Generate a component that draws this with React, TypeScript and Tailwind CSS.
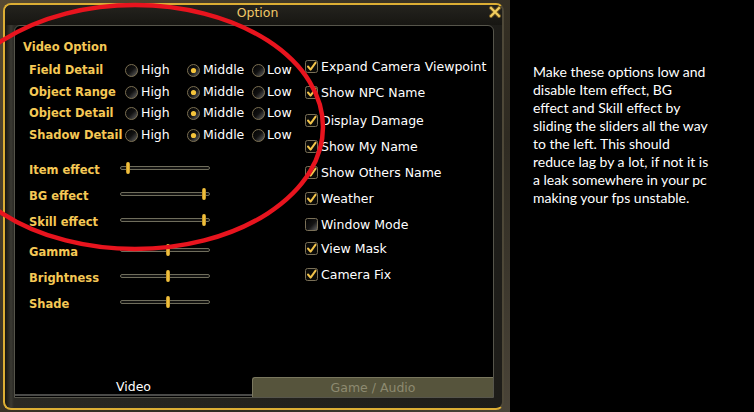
import React from "react";

const ui = { fontFamily: '"DejaVu Sans", Verdana, sans-serif' };

function Radio({ on }: { on?: boolean }) {
  return (
    <svg width="13" height="13" viewBox="0 0 13 13" className="shrink-0">
      <circle cx="6.5" cy="6.5" r="6" fill="url(#radioFill)" stroke="#7b6f52" strokeWidth="1" />
      {on && <circle cx="6.5" cy="6.5" r="2.6" fill="#f4c43c" />}
    </svg>
  );
}

function Check({ on }: { on: boolean }) {
  return (
    <svg width="13" height="13" viewBox="0 0 13 13" className="shrink-0 overflow-visible">
      <rect x="0.5" y="0.5" width="12" height="12" rx="2" fill={on ? "#0a0a08" : "url(#boxFill)"} stroke="#7a7057" strokeWidth="1" />
      {on && <path d="M3 6.5 L5.6 9.6 L10.6 2.6" fill="none" stroke="#f2c34a" strokeWidth="2" strokeLinecap="round" strokeLinejoin="round" />}
    </svg>
  );
}

const radioRows = [
  { label: "Field Detail" },
  { label: "Object Range" },
  { label: "Object Detail" },
  { label: "Shadow Detail" },
];

const sliders = [
  { label: "Item effect", thumb: "left-[5px]", row: "" },
  { label: "BG effect", thumb: "left-[81px]", row: "" },
  { label: "Skill effect", thumb: "left-[81px]", row: "" },
  { label: "Gamma", thumb: "left-[45px]", row: "mt-[4px]" },
  { label: "Brightness", thumb: "left-[45px]", row: "" },
  { label: "Shade", thumb: "left-[45px]", row: "" },
];

const checks = [
  { label: "Expand Camera Viewpoint", on: true, mt: "mt-[34px]" },
  { label: "Show NPC Name", on: true, mt: "mt-[12.5px]" },
  { label: "Display Damage", on: true, mt: "mt-[15px]" },
  { label: "Show My Name", on: true, mt: "mt-[13.5px]" },
  { label: "Show Others Name", on: true, mt: "mt-[13px]" },
  { label: "Weather", on: true, mt: "mt-[12.5px]" },
  { label: "Window Mode", on: false, mt: "mt-[13px]" },
  { label: "View Mask", on: true, mt: "mt-[11px]" },
  { label: "Camera Fix", on: true, mt: "mt-[13px]" },
];

const note = [
  "Make these options low and",
  "disable Item effect, BG",
  "effect and Skill effect by",
  "sliding the sliders all the way",
  "to the left. This should",
  "reduce lag by a lot, if not it is",
  "a leak somewhere in your pc",
  "making your fps unstable.",
];

export default function App() {
  return (
    <div className="relative flex w-[754px] h-[412px] overflow-hidden bg-black">
      <svg width="0" height="0" className="absolute">
        <defs>
          <linearGradient id="radioFill" x1="0" y1="0" x2="1" y2="1">
            <stop offset="0" stopColor="#000" />
            <stop offset="0.5" stopColor="#111" />
            <stop offset="1" stopColor="#6c6c6c" />
          </linearGradient>
          <linearGradient id="boxFill" x1="0" y1="0" x2="1" y2="1">
            <stop offset="0" stopColor="#000" />
            <stop offset="0.55" stopColor="#151515" />
            <stop offset="1" stopColor="#6a6a6a" />
          </linearGradient>
        </defs>
      </svg>

      {/* game window area */}
      <div className="w-[510px] h-[412px] shrink-0 pt-[3px] pl-[3px] bg-[linear-gradient(135deg,#574a32,#3a3325_40%,#2f2b22_70%,#4a4438)]">
        <div
          className="relative flex flex-col w-[501px] h-[407px] rounded-[8px] border-2 border-[#dcae34] border-r-[#4e4838] bg-[linear-gradient(90deg,#15140f_0px,#3a3932_6px,#2a2924_9px,#24231e_50%,#1e1d19)]"
          style={ui}
        >
          <div className="h-[20px] shrink-0 text-center pl-[8px] text-[12.5px] leading-[15px] text-[#f0c868] bg-[linear-gradient(180deg,#24231e,#171612)] rounded-t-[6px]">
            Option
          </div>
          <svg width="12" height="12" viewBox="0 0 12 12" className="absolute right-[1px] top-[1px]">
            <path d="M2 2 L10 10 M10 2 L2 10" stroke="#6b5420" strokeWidth="4" strokeLinecap="square" />
            <path d="M2 2 L10 10 M10 2 L2 10" stroke="#f4d060" strokeWidth="2" strokeLinecap="square" />
          </svg>

          <div className="ml-[9px] w-[480px] h-[373px] flex flex-col rounded-t-[6px] border border-[#56554b] bg-black overflow-hidden">
            <div className="flex flex-1">
              {/* left column */}
              <div className="w-[290px] shrink-0 flex flex-col">
                <div className="mt-[12.5px] ml-[8px] h-[16px] leading-[16px] text-[11.5px] font-bold text-[#f5c855]">
                  Video Option
                </div>
                <div className="mt-[5.5px] flex flex-col">
                  {radioRows.map((r) => (
                    <div key={r.label} className="h-[21.5px] flex items-center">
                      <div className="ml-[14px] w-[96px] text-[11.5px] font-bold text-[#f5c855] whitespace-nowrap">{r.label}</div>
                      <div className="w-[62px] flex items-center gap-[3px]">
                        <Radio />
                        <span className="text-[12.5px] text-white">High</span>
                      </div>
                      <div className="w-[65px] flex items-center gap-[3px]">
                        <Radio on />
                        <span className="text-[12.5px] text-white">Middle</span>
                      </div>
                      <div className="flex items-center gap-[2px]">
                        <Radio />
                        <span className="text-[12.5px] text-white">Low</span>
                      </div>
                    </div>
                  ))}
                </div>
                <div className="mt-[11.5px] flex flex-col">
                  {sliders.map((s) => (
                    <div key={s.label} className={`h-[26px] flex items-center ${s.row}`}>
                      <div className="ml-[14px] w-[91px] text-[11.5px] font-bold text-[#f5c855] whitespace-nowrap">{s.label}</div>
                      <div className="relative w-[90px] h-[4px] mb-[5px] rounded-[2px] border border-[#6f6d5c] bg-[#121210]">
                        <div className={`absolute top-[-5px] w-[4px] h-[12px] rounded-[2px] bg-[linear-gradient(90deg,#b8861c,#ffd24a_50%,#b8861c)] ${s.thumb}`} />
                      </div>
                    </div>
                  ))}
                </div>
              </div>
              {/* right column */}
              <div className="flex flex-col">
                {checks.map((c) => (
                  <div key={c.label} className={`h-[13px] flex items-center gap-[3px] ${c.mt}`}>
                    <Check on={c.on} />
                    <span className="text-[12.5px] leading-[13px] text-white whitespace-nowrap">{c.label}</span>
                  </div>
                ))}
              </div>
            </div>
            {/* tabs */}
            <div className="h-[20px] flex shrink-0">
              <div className="w-[237px] h-[19px] flex items-center justify-center pt-[3px] text-[12.5px] text-white bg-black border-b-2 border-[#4a4a48]">
                Video
              </div>
              <div className="flex-1 h-[20px] flex items-center justify-center pt-[1px] text-[12.5px] text-[#8d8a70] bg-[#56543c] border-t border-l border-[#7a775e] rounded-tl-[3px]">
                Game / Audio
              </div>
            </div>
          </div>
        </div>
      </div>

      {/* note */}
      <div className="flex-1 pl-[23px] pt-[63px] text-white text-[14px] leading-[18px]" style={{ fontFamily: 'Lato, "Open Sans", sans-serif' }}>
        {note.map((l) => (
          <div key={l} className="whitespace-nowrap">{l}</div>
        ))}
      </div>

      {/* red annotation */}
      <svg width="754" height="412" className="absolute left-0 top-0 pointer-events-none">
        <ellipse cx="135" cy="127" rx="188" ry="122" fill="none" stroke="#e8141e" strokeWidth="4.5" />
      </svg>
    </div>
  );
}
